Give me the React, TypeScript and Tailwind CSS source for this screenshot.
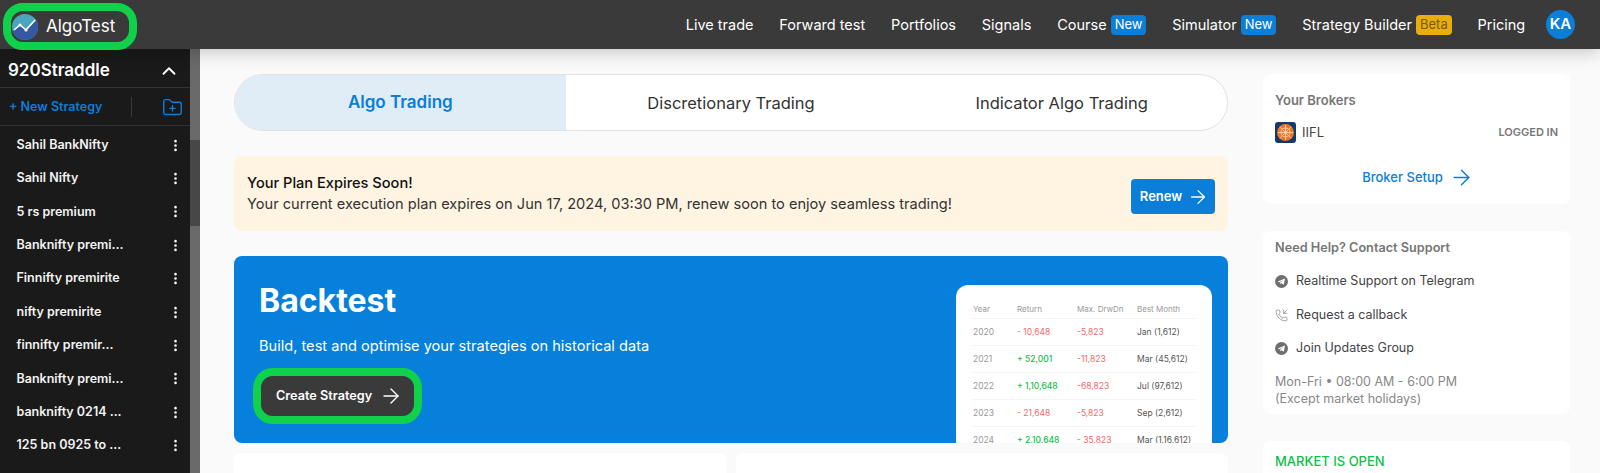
import { ArrowRight, ChevronUp, EllipsisVertical, FolderPlus, PhoneIncoming } from 'lucide-react';

const strategies = [
  'Sahil BankNifty',
  'Sahil Nifty',
  '5 rs premium',
  'Banknifty premi...',
  'Finnifty premirite',
  'nifty premirite',
  'finnifty premir...',
  'Banknifty premi...',
  'banknifty 0214 ...',
  '125 bn 0925 to ...',
];

const navLinks = [
  { label: 'Live trade' },
  { label: 'Forward test' },
  { label: 'Portfolios' },
  { label: 'Signals' },
  { label: 'Course', badge: 'New' },
  { label: 'Simulator', badge: 'New' },
  { label: 'Strategy Builder', badge: 'Beta' },
  { label: 'Pricing' },
];

const tableRows = [
  { year: '2020', ret: '- 10,648', up: false, dd: '-5,823', best: 'Jan (1,612)' },
  { year: '2021', ret: '+ 52,001', up: true, dd: '-11,823', best: 'Mar (45,612)' },
  { year: '2022', ret: '+ 1,10,648', up: true, dd: '-68,823', best: 'Jul (97,612)' },
  { year: '2023', ret: '- 21,648', up: false, dd: '-5,823', best: 'Sep (2,612)' },
  { year: '2024', ret: '+ 2,10,648', up: true, dd: '- 35,823', best: 'Mar (1,16,612)' },
];

const Logo = () => (
  <svg width="26" height="26" viewBox="0 0 26 26">
    <circle cx="13" cy="13" r="13" fill="#4aa6bd" />
    <path d="M1 17 L8 11 L14 16 L25 6 L26 13 A13 13 0 0 1 0 13 Z" fill="#3558a3" />
    <path d="M2 16 L8 11 L14 16 L23 6" fill="none" stroke="#fff" strokeWidth="1.6" />
    <circle cx="8" cy="11" r="1.6" fill="#fff" />
    <circle cx="14" cy="16" r="1.6" fill="#fff" />
  </svg>
);

const BrokerIcon = () => (
  <svg width="21" height="21" viewBox="0 0 21 21">
    <rect width="21" height="21" rx="3" fill="#123a6b" />
    <circle cx="10.5" cy="10.5" r="8.5" fill="#f0752a" />
    <path d="M10.5 3v15M3 10.5h15M5.2 5.2l10.6 10.6M15.8 5.2L5.2 15.8" stroke="#fbc9a4" strokeWidth="1" />
    <circle cx="10.5" cy="10.5" r="4.5" fill="none" stroke="#fbc9a4" strokeWidth="1" />
  </svg>
);

const TelegramIcon = () => (
  <svg width="13" height="13" viewBox="0 0 13 13" className="shrink-0">
    <circle cx="6.5" cy="6.5" r="6.5" fill="#6f6f6f" />
    <path d="M2.6 6.6 L10 3.6 L8.8 9.8 L6.5 8.2 L5.4 9.3 L5.2 7.6 L8.4 5 L4.4 7.2 Z" fill="#fff" />
  </svg>
);

const Sidebar = () => (
  <aside className="flex w-[200px] shrink-0">
    <div className="flex w-[190px] flex-col bg-[#1a1a1a] text-white">
      <div className="flex h-[39px] items-center justify-between border-b border-[#333] pl-2 pr-[10px] pt-[6px]">
        <span className="text-[17px] font-semibold">920Straddle</span>
        <ChevronUp size={22} strokeWidth={2} />
      </div>
      <div className="flex h-[38px] items-center border-b border-[#333] pl-[9px] pt-[1px]">
        <span className="w-[122px] text-[12.5px] font-semibold text-[#0a7ed8]">+ New Strategy</span>
        <div className="h-[20px] w-px bg-[#3a3a3a]" />
        <FolderPlus size={21} strokeWidth={1.6} className="ml-[30px] text-[#0a7ed8]" />
      </div>
      <div className="flex flex-col pt-[2px]">
        {strategies.map((name, i) => (
          <div key={i} className="flex h-[33.4px] items-center justify-between pl-[16.5px] pr-[7px] pt-[1px]">
            <span className="text-[12.5px] font-semibold text-[#f2f2f2]">{name}</span>
            <EllipsisVertical size={15} strokeWidth={2.2} />
          </div>
        ))}
      </div>
    </div>
    <div className="flex w-[10px] flex-col bg-[#6a6a6a]">
      <div className="mt-[91px] h-[86px] bg-[#474747]" />
    </div>
  </aside>
);

const Tabs = () => (
  <div className="grid h-[57px] grid-cols-3 overflow-hidden rounded-full border border-[#e2e2e2] bg-white text-[16.5px] text-[#333]">
    <div className="flex items-center justify-center bg-[#e0ecf6] text-[17px] font-semibold text-[#0a7ed8]">Algo Trading</div>
    <div className="flex items-center justify-center pt-[1px]">Discretionary Trading</div>
    <div className="flex items-center justify-center pt-[1px]">Indicator Algo Trading</div>
  </div>
);

const PlanAlert = () => (
  <div className="mt-[25px] flex h-[75px] items-center justify-between rounded-lg bg-[#fff3e2] pl-[13px] pr-[13px]">
    <div className="text-[14.6px] leading-[21px] text-[#333]">
      <div className="font-medium text-[#111]">Your Plan Expires Soon!</div>
      <div>Your current execution plan expires on Jun 17, 2024, 03:30 PM, renew soon to enjoy seamless trading!</div>
    </div>
    <button className="mt-[6px] flex h-[35px] w-[84px] items-center justify-center gap-[5px] rounded bg-[#0a7ed8] pl-[3px] text-[13px] font-semibold text-white">
      Renew
      <ArrowRight size={22} strokeWidth={1.4} />
    </button>
  </div>
);

const Hero = () => (
  <div className="mt-[25px] flex h-[187px] justify-between overflow-hidden rounded-lg bg-[#0680da] pl-[25px] pr-[16px] pt-[24px]">
    <div className="text-white">
      <h1 className="text-[32px] font-bold leading-[42px]">Backtest</h1>
      <p className="mt-[14px] text-[14.6px] leading-[20px]">Build, test and optimise your strategies on historical data</p>
      <div className="-ml-[6px] mt-[12px] w-fit rounded-[20px] border-[8px] border-[#10d14a]">
        <button className="flex h-[40px] w-[153px] items-center gap-[7px] rounded-xl bg-[#3a3a3a] pl-[15px] text-[12.7px] font-semibold text-white">
          Create Strategy
          <ArrowRight size={24} strokeWidth={1.4} />
        </button>
      </div>
    </div>
    <div className="mt-[5px] h-[180px] w-[256px] self-start rounded-t-xl bg-white px-[17px] pt-[14px] text-[8.5px]">
      <div className="grid h-[20px] grid-cols-[44px_60px_60px_1fr] items-center border-b border-[#f3f3f3] text-[8px] text-[#999]">
        <span>Year</span>
        <span>Return</span>
        <span>Max. DrwDn</span>
        <span>Best Month</span>
      </div>
      {tableRows.map((row) => (
        <div key={row.year} className="grid h-[27px] grid-cols-[44px_60px_60px_1fr] items-center border-b border-[#f3f3f3]">
          <span className="text-[#999]">{row.year}</span>
          <span className={row.up ? 'font-medium text-[#10c04a]' : 'text-[#f26a6a]'}>{row.ret}</span>
          <span className="text-[#f26a6a]">{row.dd}</span>
          <span className="text-[#555]">{row.best}</span>
        </div>
      ))}
    </div>
  </div>
);

const RightColumn = () => (
  <div className="flex w-[307px] shrink-0 flex-col">
    <div className="h-[130px] shrink-0 rounded-lg bg-white px-3 pt-[18px]">
      <div className="text-[13px] font-semibold leading-4 text-[#777]">Your Brokers</div>
      <div className="mt-[14px] flex items-center justify-between">
        <div className="flex items-center gap-[6px] text-[13px] text-[#444]">
          <BrokerIcon />
          IIFL
        </div>
        <span className="text-[11px] font-semibold text-[#777]">LOGGED IN</span>
      </div>
      <div className="mt-[22px] flex items-center justify-center gap-[6px] pl-[3px] text-[13px] font-medium text-[#0a7ed8]">
        Broker Setup
        <ArrowRight size={25} strokeWidth={1.4} />
      </div>
    </div>
    <div className="mt-[27px] h-[183px] shrink-0 rounded-lg bg-white px-3 pt-[9px] text-[12.5px] text-[#444]">
      <div className="text-[12.7px] font-semibold leading-4 text-[#777]">Need Help? Contact Support</div>
      <div className="mt-[17px] flex h-[17px] items-center gap-2">
        <TelegramIcon />
        Realtime Support on Telegram
      </div>
      <div className="mt-[17px] flex h-[17px] items-center gap-2">
        <PhoneIncoming size={13} strokeWidth={1.2} className="shrink-0 text-[#777]" />
        Request a callback
      </div>
      <div className="mt-[16px] flex h-[17px] items-center gap-2">
        <TelegramIcon />
        Join Updates Group
      </div>
      <div className="mt-[16px] leading-[17px] text-[#888]">
        Mon-Fri • 08:00 AM - 6:00 PM
        <br />
        (Except market holidays)
      </div>
    </div>
    <div className="mt-[27px] h-[60px] shrink-0 rounded-lg bg-white px-3 pt-[12px] text-[13px] font-medium leading-4 text-[#10c04a]">
      MARKET IS OPEN
    </div>
  </div>
);

export default function App() {
  return (
    <div className="flex h-[473px] w-[1600px] flex-col overflow-hidden bg-[#fafafa] font-[Inter,sans-serif]">
      <header className="relative z-10 flex h-[49px] shrink-0 items-start justify-between bg-[#3a3a3a] pl-[3px] pr-[25px] shadow-[0_3px_18px_rgba(0,0,0,0.22)]">
        <div className="mt-[3px] flex h-[47px] w-[134px] items-center gap-2 rounded-[20px] border-[8px] border-[#10d14a] bg-[#3a3a3a] pl-[1px] text-[17px] font-normal text-white">
          <Logo />
          AlgoTest
        </div>
        <nav className="flex h-[49px] items-center text-[14.5px] text-white">
          {navLinks.map((link) => (
            <div key={link.label} className="mr-[25.8px] flex items-center gap-1">
              {link.label}
              {link.badge && (
                <span
                  className={`flex h-[20px] items-center rounded px-[4px] text-[13px] font-normal ${link.badge === 'Beta' ? 'bg-[#e8ae0c] text-[#7a5a00]' : 'bg-[#0a7ed8] text-white'}`}
                >
                  {link.badge}
                </span>
              )}
            </div>
          ))}
          <div className="-ml-[5px] flex h-[29px] w-[29px] items-center justify-center rounded-full bg-[#0a7ed8] text-[15px] font-semibold">KA</div>
        </nav>
      </header>
      <div className="flex min-h-0 flex-1">
        <Sidebar />
        <main className="flex min-w-0 flex-1 gap-[35px] pl-[34px] pr-[30px] pt-[25px]">
          <div className="w-[994px] shrink-0">
            <Tabs />
            <PlanAlert />
            <Hero />
            <div className="mt-[10px] grid grid-cols-2 gap-[10px]">
              <div className="h-[60px] rounded-lg bg-white" />
              <div className="h-[60px] rounded-lg bg-white" />
            </div>
          </div>
          <RightColumn />
        </main>
      </div>
    </div>
  );
}
